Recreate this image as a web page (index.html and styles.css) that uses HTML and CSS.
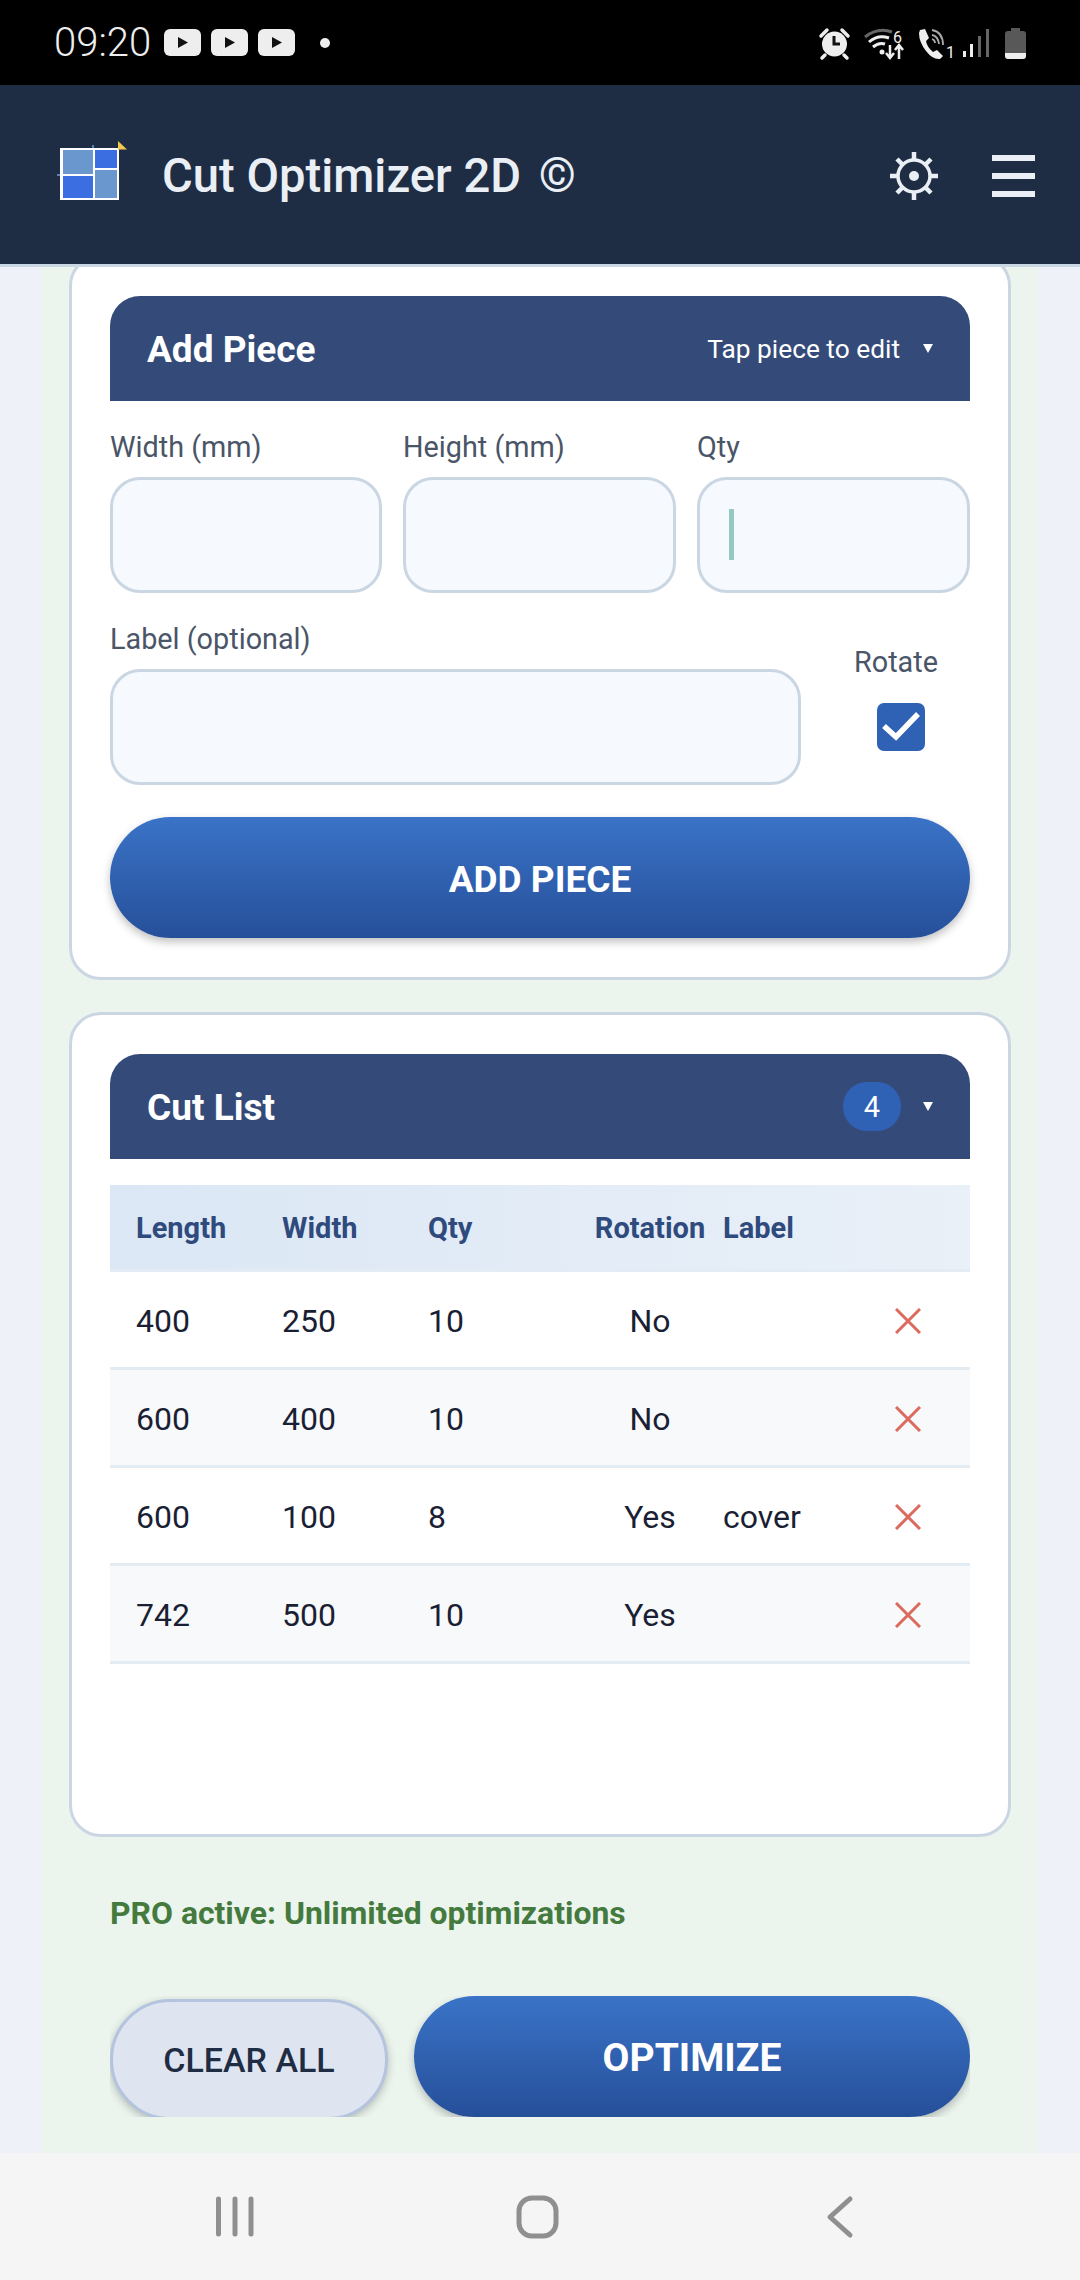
FILE: index.html
```html
<!DOCTYPE html>
<html lang="en">
<head>
<meta charset="UTF-8">
<meta name="viewport" content="width=device-width, initial-scale=1.0">
<title>Cut Optimizer 2D</title>
<link rel="stylesheet" href="styles.css">
</head>
<body>

<div class="screen">

  <div class="status-bar">
    <div class="status-left">
      <span class="clock">09:20</span>
      <svg class="yt" viewBox="0 0 37 27"><rect width="37" height="27" rx="6" fill="#eee"/><path d="M14 8l10 5.500-10 5.500z" fill="#111"/></svg>
      <svg class="yt" viewBox="0 0 37 27"><rect width="37" height="27" rx="6" fill="#eee"/><path d="M14 8l10 5.500-10 5.500z" fill="#111"/></svg>
      <svg class="yt" viewBox="0 0 37 27"><rect width="37" height="27" rx="6" fill="#eee"/><path d="M14 8l10 5.500-10 5.500z" fill="#111"/></svg>
      <span class="status-dot"></span>
    </div>
    <svg class="status-right" viewBox="815 30 215 40" width="215" height="40">
      <!-- alarm -->
      <circle cx="834.500" cy="51" r="12.500" fill="#eee"/>
      <path d="M834 43v8h6" fill="none" stroke="#111" stroke-width="3"/>
      <path d="M821 43l6-6M848 43l-6-6M825 62l-3 3M844 62l3 3" stroke="#eee" stroke-width="3.500" stroke-linecap="round"/>
      <!-- wifi -->
      <path d="M865 44q13-10 27-5" fill="none" stroke="#666" stroke-width="3"/>
      <path d="M869 49q9-8 20-4M873 54q6-5 12-3" fill="none" stroke="#eee" stroke-width="3"/>
      <circle cx="882" cy="59" r="2.500" fill="#eee"/>
      <text x="893" y="50" class="status-digit">6</text>
      <path d="M890 52v12m-4-4l4 5 4-5M899 66v-13m-4 4l4-5 4 5" fill="none" stroke="#eee" stroke-width="2.500"/>
      <!-- call -->
      <path d="M920 37l5-1 4 9-3 3q1 6 7 11l4-2 6 6-3 3q-7 1-14-8t-7-18z" fill="#eee"/>
      <path d="M932 37q11 2 11 15M932 42q6 1 7 9M932 46q3 1 3 4" fill="none" stroke="#aaa" stroke-width="1.800"/>
      <text x="946" y="65" class="status-digit">1</text>
      <!-- signal -->
      <rect x="963" y="58" width="3" height="6" fill="#eee"/>
      <rect x="970" y="51" width="3" height="13" fill="#eee"/>
      <rect x="978" y="43" width="3" height="21" fill="#666"/>
      <rect x="986" y="36" width="3" height="28" fill="#666"/>
      <!-- battery -->
      <path d="M1011 38v-3h9v3h3q3 0 3 3v19h-21v-19q0-3 3-3z" fill="#585858"/>
      <path d="M1005 60h21v3q0 3-3 3h-15q-3 0-3-3z" fill="#eee"/>
    </svg>
  </div>

  <header class="topbar">
    <svg class="logo" viewBox="0 0 72 64" width="72" height="64">
      <rect x="3" y="8" width="59" height="52" fill="#fff"/>
      <rect x="6" y="10" width="30" height="24" fill="#6b97cf"/>
      <rect x="38" y="10" width="22" height="18" fill="#3b6ee0"/>
      <rect x="38" y="30" width="22" height="28" fill="#6b97cf"/>
      <rect x="6" y="36" width="30" height="22" fill="#3b6ee0"/>
      <path d="M36 5v3M0 35h3" stroke="#6fa0d8" stroke-width="1.500"/>
      <path d="M61 1l9 8.500h-9z" fill="#f2c94c"/>
    </svg>
    <h1 class="app-title">Cut Optimizer 2D <span class="copy">©</span></h1>
    <svg class="gear" viewBox="0 0 50 50" width="50" height="50">
      <circle cx="25" cy="25" r="16" fill="none" stroke="#e9eff5" stroke-width="3.500"/>
      <circle cx="25" cy="25" r="5" fill="#e9eff5"/>
      <path d="M25 1v7M25 42v7M1 25h7M42 25h7M8 8l5 5M37 37l5 5M42 8l-5 5M13 37l-5 5" stroke="#e9eff5" stroke-width="4.500"/>
    </svg>
    <div class="burger"><span></span><span></span><span></span></div>
  </header>

  <main class="content">
    <div class="panel">

      <section class="card">
        <div class="section-head">
          <span class="section-title">Add Piece</span>
          <span class="section-info">
            <span class="hint">Tap piece to edit</span>
            <span class="arrow"></span>
          </span>
        </div>

        <div class="size-row">
          <div class="field">
            <label class="field-label" for="pieceWidth">Width (mm)</label>
            <input class="text-input" id="pieceWidth" type="text">
          </div>
          <div class="field">
            <label class="field-label" for="pieceHeight">Height (mm)</label>
            <input class="text-input" id="pieceHeight" type="text">
          </div>
          <div class="field">
            <label class="field-label" for="pieceQty">Qty</label>
            <div class="input-wrap">
              <input class="text-input" id="pieceQty" type="text">
              <span class="caret"></span>
            </div>
          </div>
        </div>

        <div class="label-row">
          <div class="field">
            <label class="field-label" for="pieceLabel">Label (optional)</label>
            <input class="text-input" id="pieceLabel" type="text">
          </div>
          <div class="rotate">
            <span class="field-label">Rotate</span>
            <svg class="checkbox" viewBox="0 0 48 48" width="48" height="48">
              <rect width="48" height="48" rx="7" fill="#2f62b5"/>
              <path d="M7 23l12 11 22-23" fill="none" stroke="#fff" stroke-width="5.500"/>
            </svg>
          </div>
        </div>

        <button class="btn-primary btn-add">ADD PIECE</button>
      </section>

      <section class="card card-list">
        <div class="section-head">
          <span class="section-title">Cut List</span>
          <span class="section-info">
            <span class="count">4</span>
            <span class="arrow"></span>
          </span>
        </div>

        <div class="table-wrap">
          <table class="cut-table">
            <colgroup>
              <col class="col-length"><col class="col-width"><col class="col-qty">
              <col class="col-rotation"><col class="col-label"><col class="col-delete">
            </colgroup>
            <thead>
              <tr>
                <th>Length</th><th>Width</th><th>Qty</th>
                <th class="center">Rotation</th><th class="label-cell">Label</th><th></th>
              </tr>
            </thead>
            <tbody>
              <tr>
                <td>400</td><td>250</td><td>10</td><td class="center">No</td><td class="label-cell"></td>
                <td class="center"><svg class="del" viewBox="0 0 26 26" width="26" height="26"><path d="M1 1l24 24M25 1L1 25"/></svg></td>
              </tr>
              <tr>
                <td>600</td><td>400</td><td>10</td><td class="center">No</td><td class="label-cell"></td>
                <td class="center"><svg class="del" viewBox="0 0 26 26" width="26" height="26"><path d="M1 1l24 24M25 1L1 25"/></svg></td>
              </tr>
              <tr>
                <td>600</td><td>100</td><td>8</td><td class="center">Yes</td><td class="label-cell">cover</td>
                <td class="center"><svg class="del" viewBox="0 0 26 26" width="26" height="26"><path d="M1 1l24 24M25 1L1 25"/></svg></td>
              </tr>
              <tr>
                <td>742</td><td>500</td><td>10</td><td class="center">Yes</td><td class="label-cell"></td>
                <td class="center"><svg class="del" viewBox="0 0 26 26" width="26" height="26"><path d="M1 1l24 24M25 1L1 25"/></svg></td>
              </tr>
            </tbody>
          </table>
        </div>
      </section>

      <p class="pro-note">PRO active: Unlimited optimizations</p>

      <div class="actions">
        <button class="btn-clear">CLEAR ALL</button>
        <button class="btn-primary btn-optimize">OPTIMIZE</button>
      </div>

    </div>
  </main>

  <nav class="nav-bar">
    <svg viewBox="0 0 1080 127" width="1080" height="127">
      <g fill="none" stroke="#8f8f8f" stroke-width="5" stroke-linecap="round" stroke-linejoin="round">
        <path d="M218.500 46v35M235 46v35M251 46v35"/>
        <rect x="519" y="45" width="37" height="38" rx="13"/>
        <path d="M850 46l-20 18 20 18"/>
      </g>
    </svg>
  </nav>

</div>

</body>
</html>
```

FILE: styles.css
```css
* {
  box-sizing: border-box;
}

body {
  margin: 0;
  font-family: Roboto, "Liberation Sans", sans-serif;
  background-color: #eef2f8;
}

.screen {
  width: 1080px;
  height: 2280px;
  display: flex;
  flex-direction: column;
  overflow: hidden;
}

/* status bar */
.status-bar {
  height: 85px;
  flex: none;
  background-color: #000;
  display: flex;
  justify-content: space-between;
  align-items: center;
  padding: 0 50px 0 54px;
}

.status-left {
  display: flex;
  align-items: center;
}

.clock {
  font-size: 40px;
  font-weight: 300;
  color: #eee;
  width: 110px;
}

.yt {
  width: 37px;
  height: 27px;
  margin-right: 10px;
}

.status-dot {
  width: 10px;
  height: 10px;
  margin-left: 15px;
  border-radius: 50%;
  background-color: #eee;
}

.status-digit {
  font-family: Roboto, sans-serif;
  font-size: 16px;
  fill: #eee;
}

/* top bar */
.topbar {
  height: 182px;
  flex: none;
  background-color: #1f2d44;
  border-bottom: 3px solid #c9d6e4;
  display: flex;
  align-items: center;
  padding: 0 45px 0 57px;
}

.logo {
  margin-top: -5px;
}

.app-title {
  margin: 2px 0 0 33px;
  font-size: 47.200px;
  font-weight: 500;
  color: #e9eff5;
  flex: 1;
}

.copy {
  margin-left: 6px;
  font-weight: 400;
}

.gear {
  margin: 3px 53px 0 0;
}

.burger {
  width: 43px;
  margin-top: 3px;
  display: flex;
  flex-direction: column;
  gap: 12px;
}

.burger span {
  height: 6px;
  background-color: #e9eff5;
}

/* scrolled area */
.content {
  flex: 1;
  min-height: 0;
  overflow: hidden;
}

.panel {
  display: flow-root;
  margin: 0 42px;
  height: 100%;
  background-color: #ebf5ee;
  padding: 0 27px;
}

.card {
  background-color: #fff;
  border: 3px solid #cbd6e3;
  border-radius: 32px;
  padding: 39px 38px;
  margin-top: 32px;
}

.card:first-child {
  margin-top: -13px;
}

.section-head {
  height: 105px;
  background-color: #344b79;
  border-radius: 30px 30px 0 0;
  display: flex;
  justify-content: space-between;
  align-items: center;
  padding: 0 37px;
  color: #fff;
}

.section-title {
  padding-top: 2px;
  font-size: 37px;
  font-weight: 700;
}

.section-info {
  display: flex;
  align-items: center;
}

.hint {
  font-size: 26.300px;
}

.arrow {
  width: 0;
  height: 0;
  margin-left: 23px;
  border-left: 5px solid transparent;
  border-right: 5px solid transparent;
  border-top: 9px solid #fff;
}

.count {
  width: 58px;
  height: 49px;
  margin-right: -1px;
  border-radius: 24px;
  background-color: #2f62b5;
  font-size: 29px;
  display: flex;
  align-items: center;
  justify-content: center;
}

/* form */
.size-row {
  display: grid;
  grid-template-columns: 272px 273px 1fr;
  gap: 21px;
  margin-top: 29px;
}

.label-row {
  display: flex;
  margin-top: 29px;
}

.label-row .field {
  width: 691px;
}

.field-label {
  display: block;
  height: 33px;
  line-height: 35px;
  margin-bottom: 14px;
  font-size: 28.800px;
  color: #4a5568;
}

.text-input {
  display: block;
  width: 100%;
  height: 116px;
  border: 3px solid #cbd6e3;
  border-radius: 30px;
  background-color: #f6faff;
  outline: none;
}

.input-wrap {
  position: relative;
}

.caret {
  position: absolute;
  left: 32px;
  top: 32px;
  width: 5px;
  height: 51px;
  background-color: #93c9c0;
}

.rotate {
  flex: 1;
  display: flex;
  flex-direction: column;
  align-items: center;
  padding-top: 23px;
  padding-left: 21px;
}

.rotate .field-label {
  margin-bottom: 25px;
}

.checkbox {
  margin-left: 9px;
}

/* buttons */
.btn-primary {
  border: none;
  border-radius: 61px;
  height: 121px;
  padding: 3px 0 0;
  background: linear-gradient(180deg, #3a73c7, #264f99);
  color: #fff;
  font-family: inherit;
  font-weight: 700;
  box-shadow: 0 4px 8px rgba(0, 0, 0, 0.25);
}

.btn-add {
  display: block;
  width: 100%;
  margin-top: 32px;
  font-size: 37px;
}

.actions {
  display: flex;
  align-items: flex-start;
  gap: 26px;
  height: 121px;
  margin: 65px 41px 0;
  overflow: hidden;
}

.btn-clear {
  flex: none;
  width: 278px;
  height: 121px;
  margin-top: 3px;
  padding: 0;
  border: 3px solid #b4c4de;
  border-radius: 61px;
  background-color: #dfe5f0;
  color: #1f2d44;
  font-family: inherit;
  font-size: 34px;
  font-weight: 500;
  box-shadow: 0 3px 8px rgba(0, 0, 0, 0.25);
}

.btn-optimize {
  flex: 1;
  font-size: 39px;
}

/* table */
.table-wrap {
  margin-top: 26px;
  min-height: 610px;
}

.cut-table {
  width: 100%;
  table-layout: fixed;
  border-collapse: separate;
  border-spacing: 0;
}

.col-length { width: 146px; }
.col-width { width: 146px; }
.col-qty { width: 178px; }
.col-rotation { width: 140px; }
.col-label { width: 126px; }
.col-delete { width: 124px; }

.cut-table th,
.cut-table td {
  padding: 2px 0 0 26px;
  text-align: left;
}

.cut-table thead tr {
  background: linear-gradient(90deg, #dbe7f5, #e9f0f8);
}

.cut-table th {
  height: 87px;
  border-bottom: 3px solid #e3ebf4;
  font-size: 29px;
  font-weight: 700;
  color: #2f4a7c;
}

.cut-table td {
  height: 98px;
  border-bottom: 3px solid #e3ebf3;
  font-size: 32px;
  color: #1a1f33;
}

.cut-table tbody tr:nth-child(even) {
  background-color: #f7f9fb;
}

.cut-table .center {
  text-align: center;
  padding-left: 0;
}

.cut-table .label-cell {
  padding-left: 3px;
}

.del {
  display: block;
  margin: 0 auto;
  fill: none;
  stroke: #dc6a5e;
  stroke-width: 3;
}

.pro-note {
  margin: 58px 0 0 41px;
  font-size: 31.900px;
  line-height: 36px;
  font-weight: 700;
  color: #457a3f;
}

/* nav bar */
.nav-bar {
  height: 127px;
  flex: none;
  background-color: #f5f5f5;
}

.nav-bar svg {
  display: block;
}
```
